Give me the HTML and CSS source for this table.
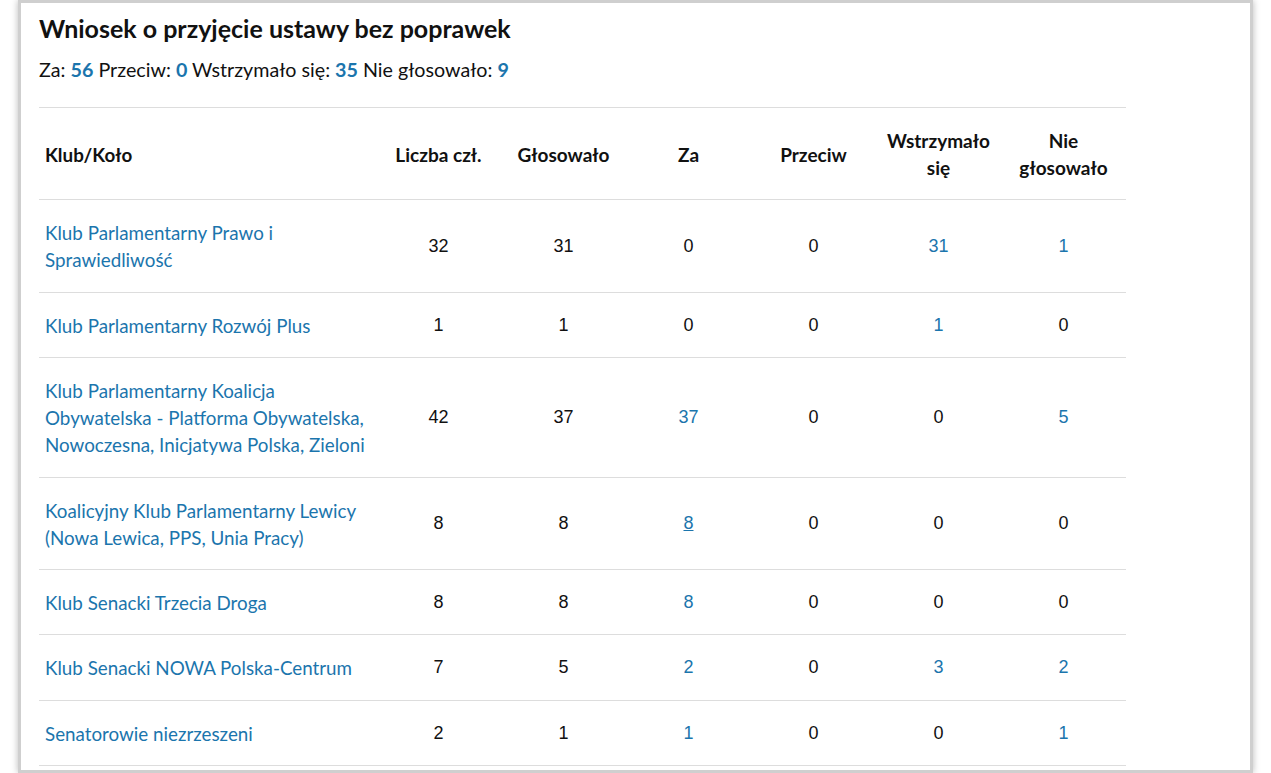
FILE: index.html
```html
<!DOCTYPE html>
<html lang="pl">
<head>
<meta charset="utf-8">
<title>Wniosek o przyjęcie ustawy bez poprawek</title>
<link rel="stylesheet" href="styles.css">
</head>
<body>
<div class="card">
  <h2 class="title">Wniosek o przyjęcie ustawy bez poprawek</h2>
  <p class="summary">Za: <a href="#">56</a> Przeciw: <a href="#">0</a> Wstrzymało się: <a href="#">35</a> Nie głosowało: <a href="#">9</a></p>
  <table class="votes">
    <thead>
      <tr>
        <th class="name">Klub/Koło</th>
        <th>Liczba czł.</th>
        <th>Głosowało</th>
        <th>Za</th>
        <th>Przeciw</th>
        <th>Wstrzymało się</th>
        <th>Nie głosowało</th>
      </tr>
    </thead>
    <tbody>
      <tr>
        <td class="name"><a href="#">Klub Parlamentarny Prawo i Sprawiedliwość</a></td>
        <td>32</td><td>31</td><td>0</td><td>0</td><td><a href="#">31</a></td><td><a href="#">1</a></td>
      </tr>
      <tr>
        <td class="name"><a href="#">Klub Parlamentarny Rozwój Plus</a></td>
        <td>1</td><td>1</td><td>0</td><td>0</td><td><a href="#">1</a></td><td>0</td>
      </tr>
      <tr>
        <td class="name"><a href="#">Klub Parlamentarny Koalicja Obywatelska - Platforma Obywatelska, Nowoczesna, Inicjatywa Polska, Zieloni</a></td>
        <td>42</td><td>37</td><td><a href="#">37</a></td><td>0</td><td>0</td><td><a href="#">5</a></td>
      </tr>
      <tr>
        <td class="name"><a href="#">Koalicyjny Klub Parlamentarny Lewicy (Nowa Lewica, PPS, Unia Pracy)</a></td>
        <td>8</td><td>8</td><td><a href="#" class="hover">8</a></td><td>0</td><td>0</td><td>0</td>
      </tr>
      <tr>
        <td class="name"><a href="#">Klub Senacki Trzecia Droga</a></td>
        <td>8</td><td>8</td><td><a href="#">8</a></td><td>0</td><td>0</td><td>0</td>
      </tr>
      <tr>
        <td class="name"><a href="#">Klub Senacki NOWA Polska-Centrum</a></td>
        <td>7</td><td>5</td><td><a href="#">2</a></td><td>0</td><td><a href="#">3</a></td><td><a href="#">2</a></td>
      </tr>
      <tr>
        <td class="name"><a href="#">Senatorowie niezrzeszeni</a></td>
        <td>2</td><td>1</td><td><a href="#">1</a></td><td>0</td><td>0</td><td><a href="#">1</a></td>
      </tr>
    </tbody>
  </table>
</div>
</body>
</html>
```

FILE: styles.css
```css
html, body {
  margin: 0;
  padding: 0;
  background: #ffffff;
  overflow: hidden;
}

body {
  padding-left: 18px;
  font-family: Lato, "Noto Sans", sans-serif;
  color: #111111;
}

.card {
  box-sizing: border-box;
  width: 1235px;
  height: 773px;
  background: #ffffff;
  border: 3px solid #cfcfcf;
  box-shadow: 0 0 7px rgba(0, 0, 0, 0.28);
  padding: 11px 18px 0 18px;
  overflow: hidden;
}

a {
  color: #1b75ad;
  text-decoration: none;
}

.title {
  margin: 0;
  font-size: 25px;
  line-height: 29px;
  font-weight: 700;
  color: #111111;
}

.summary {
  margin: 13px 0 0 0;
  font-size: 19.7px;
  line-height: 27px;
}

.summary a {
  font-weight: 700;
}

.votes {
  margin-top: 24px;
  width: 1087px;
  border-collapse: collapse;
  border-top: 1px solid #dddddd;
  table-layout: fixed;
}

.votes th,
.votes td {
  padding: 19px 6px 18.4px 6px;
  font-size: 19px;
  line-height: 27px;
  text-align: center;
  vertical-align: middle;
  border-bottom: 1px solid #dddddd;
  width: 113px;
}

.votes th {
  font-weight: 700;
  color: #111111;
}

.votes td {
  font-family: "Liberation Sans", Arial, sans-serif;
  font-size: 18px;
  color: #111111;
}

.votes th.name,
.votes td.name {
  width: 325px;
  text-align: left;
  font-family: Lato, "Noto Sans", sans-serif;
  font-size: 18.8px;
}

.votes a.hover {
  text-decoration: underline;
}
```
